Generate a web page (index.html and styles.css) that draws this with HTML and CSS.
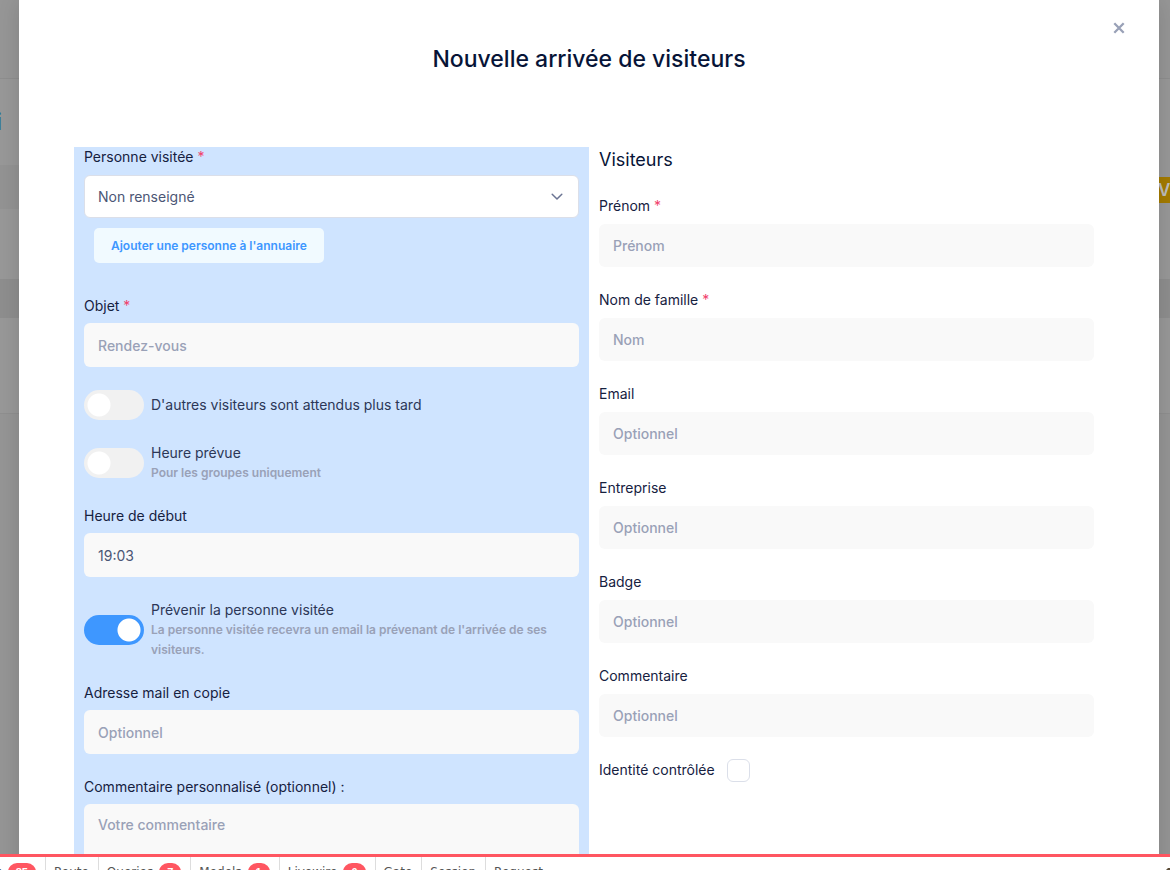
FILE: index.html
```html
<!DOCTYPE html>
<html lang="fr">
<head>
<meta charset="utf-8">
<meta name="viewport" content="width=device-width, initial-scale=1">
<title>Nouvelle arrivée de visiteurs</title>
<link rel="stylesheet" href="styles.css">
</head>
<body>
<div class="backdrop" aria-hidden="true">
  <div class="band band-header"></div>
  <div class="band band-title"><span class="page-title">i</span></div>
  <div class="band band-filters"><span class="tag">V</span></div>
  <div class="band band-space"></div>
  <div class="band band-thead"></div>
  <div class="band band-rows"></div>
</div>

<div class="modal" role="dialog" aria-labelledby="modal-title">
  <div class="dialog">
    <button class="close" type="button" aria-label="Fermer">
      <svg width="12" height="12" viewBox="0 0 12 12"><path d="M1.3 1.3 L10.7 10.7 M10.7 1.3 L1.3 10.7" stroke="currentColor" stroke-width="2.3" fill="none"/></svg>
    </button>
    <h1 class="title" id="modal-title">Nouvelle arrivée de visiteurs</h1>
    <form class="columns">
      <div class="column column-visit">
        <div class="field field-host">
          <label for="host">Personne visitée <span class="required">*</span></label>
          <div class="select-wrap">
            <select class="control select" id="host"><option>Non renseigné</option></select>
            <svg class="chevron" width="12" height="8" viewBox="0 0 12 8"><path d="M1.2 1.2 L6 6 L10.8 1.2" stroke="currentColor" stroke-width="1.5" fill="none" stroke-linecap="round" stroke-linejoin="round"/></svg>
          </div>
          <button class="add-button" type="button">Ajouter une personne à l'annuaire</button>
        </div>
        <div class="field">
          <label for="subject">Objet <span class="required">*</span></label>
          <input class="control" id="subject" type="text" placeholder="Rendez-vous">
        </div>
        <label class="switch">
          <input class="toggle" type="checkbox">
          <span class="switch-text">D'autres visiteurs sont attendus plus tard</span>
        </label>
        <label class="switch">
          <input class="toggle" type="checkbox">
          <span class="switch-text">Heure prévue<small>Pour les groupes uniquement</small></span>
        </label>
        <div class="field">
          <label for="start">Heure de début</label>
          <input class="control" id="start" type="text" value="19:03">
        </div>
        <label class="switch">
          <input class="toggle" type="checkbox" checked>
          <span class="switch-text">Prévenir la personne visitée<small>La personne visitée recevra un email la prévenant de l'arrivée de ses visiteurs.</small></span>
        </label>
        <div class="field">
          <label for="copy">Adresse mail en copie</label>
          <input class="control" id="copy" type="text" placeholder="Optionnel">
        </div>
        <div class="field">
          <label for="message">Commentaire personnalisé (optionnel) :</label>
          <textarea class="control area" id="message" placeholder="Votre commentaire"></textarea>
        </div>
      </div>
      <div class="column column-visitors">
        <h2 class="subtitle">Visiteurs</h2>
        <div class="field">
          <label for="first-name">Prénom <span class="required">*</span></label>
          <input class="control" id="first-name" type="text" placeholder="Prénom">
        </div>
        <div class="field">
          <label for="last-name">Nom de famille <span class="required">*</span></label>
          <input class="control" id="last-name" type="text" placeholder="Nom">
        </div>
        <div class="field">
          <label for="email">Email</label>
          <input class="control" id="email" type="text" placeholder="Optionnel">
        </div>
        <div class="field">
          <label for="company">Entreprise</label>
          <input class="control" id="company" type="text" placeholder="Optionnel">
        </div>
        <div class="field">
          <label for="badge">Badge</label>
          <input class="control" id="badge" type="text" placeholder="Optionnel">
        </div>
        <div class="field">
          <label for="comment">Commentaire</label>
          <input class="control" id="comment" type="text" placeholder="Optionnel">
        </div>
        <div class="identity">
          <label for="identity">Identité contrôlée</label>
          <input class="checkbox" id="identity" type="checkbox">
        </div>
      </div>
    </form>
  </div>
</div>

<nav class="debugbar">
  <a class="tab tab-first" href="#">s<span class="count">85</span></a>
  <a class="tab" href="#">Route</a>
  <a class="tab" href="#">Queries<span class="count">7</span></a>
  <a class="tab" href="#">Models<span class="count">1</span></a>
  <a class="tab" href="#">Livewire<span class="count">0</span></a>
  <a class="tab" href="#">Gate</a>
  <a class="tab" href="#">Session</a>
  <a class="tab" href="#">Request</a>
  <svg class="opener" width="4" height="3" viewBox="0 0 4 3"><path d="M0 3 L2 1 H4 V3 Z" fill="#5a4a35"/></svg>
</nav>
</body>
</html>
```
FILE: styles.css
```css
* { box-sizing: border-box; }

body {
  margin: 0;
  height: 100vh;
  overflow: hidden;
  font-family: Inter, sans-serif;
  font-size: 14px;
  line-height: 20px;
  color: #071437;
}

/* Dimmed page behind the dialog */
.backdrop {
  position: fixed;
  inset: 0;
  background: #969696;
}
.band { background: #999999; }
.band-header { height: 79px; background: #979797; border-bottom: 1px solid #8f8f8f; }
.band-title { height: 86px; padding-top: 33px; }
.page-title {
  display: flex;
  justify-content: flex-end;
  width: 2px;
  font-size: 23px;
  font-weight: 600;
  color: #2b6ca3;
}
.band-filters {
  display: flex;
  align-items: center;
  justify-content: flex-end;
  height: 44px;
  padding-top: 6px;
  background: linear-gradient(90deg, #949494 50%, #999999 50%);
}
.tag {
  width: 12px;
  height: 26px;
  overflow: hidden;
  background: #a57c00;
  color: #bfbfbf;
  font-size: 17px;
  font-weight: 600;
  line-height: 26px;
}
.band-space { height: 70px; }
.band-thead { height: 39px; background: #8f8f8f; }
.band-rows { height: 96px; border-bottom: 1px solid #909090; }

/* Dialog */
.modal {
  position: fixed;
  inset: 0;
  padding: 0 11px 0 19px;
  overflow: hidden;
}
.dialog {
  position: relative;
  min-height: 100%;
  padding: 44px 55px 40px;
  background: #ffffff;
  box-shadow: 0 0 24px rgba(0, 0, 0, 0.15);
}
.close {
  position: absolute;
  top: 16px;
  right: 28px;
  display: grid;
  place-items: center;
  width: 24px;
  height: 24px;
  padding: 0;
  border: 0;
  background: none;
  color: #99a1b7;
}
.title {
  margin: 0 0 73px;
  font-size: 23px;
  font-weight: 500;
  line-height: 30px;
  text-align: center;
}
.columns {
  display: grid;
  grid-template-columns: 1fr 1fr;
}
.column {
  display: flex;
  flex-direction: column;
  gap: 23px;
  padding: 0 10px 30px;
}
.column-visit { background: #cfe4ff; }

.field {
  display: flex;
  flex-direction: column;
  gap: 8px;
  color: #16213f;
}
.column-visit .field { gap: 7px; }
.column-visit .field-host {
  gap: 8px;
  padding-bottom: 10px;
}
.required { color: #f1416c; }
.control {
  width: 100%;
  height: 43px;
  padding: 0 14px;
  border: 0;
  border-radius: 6px;
  background: #f9f9f9;
  color: #4b5675;
  font: inherit;
}
.column-visit .control { height: 44px; }
.control::placeholder {
  color: #99a1b7;
  font-weight: 500;
  opacity: 1;
}
.column-visit .area {
  height: 110px;
  padding-top: 11px;
  resize: none;
}
.select-wrap { position: relative; }
.column-visit .select {
  display: block;
  height: 43px;
  padding: 0 13px;
  border: 1px solid #dbdfe9;
  background: #ffffff;
  appearance: none;
}
.chevron {
  position: absolute;
  top: 18px;
  right: 16px;
  color: #6b7493;
  pointer-events: none;
}
.add-button {
  align-self: flex-start;
  height: 35px;
  margin: 2px 10px 0;
  padding: 0 17px;
  border: 0;
  border-radius: 5px;
  background: #f1faff;
  color: #3e97ff;
  font: inherit;
  font-size: 12px;
  font-weight: 600;
}

.switch {
  display: flex;
  align-items: center;
  gap: 7px;
  color: #2c3757;
}
.toggle {
  flex: none;
  width: 60px;
  height: 30px;
  margin: 0;
  border-radius: 15px;
  background: radial-gradient(circle at 15px 15px, #ffffff 11px, #f1f1f1 12px);
  appearance: none;
}
.toggle:checked { background: radial-gradient(circle at 45px 15px, #ffffff 11px, #3e97ff 12px); }
.switch-text small {
  display: block;
  color: #99a1b7;
  font-size: 12px;
  font-weight: 600;
}

.subtitle {
  margin: 0;
  font-size: 18px;
  font-weight: 400;
  line-height: 26px;
}
.identity {
  display: flex;
  align-items: center;
  gap: 12px;
  height: 20px;
  color: #16213f;
}
.checkbox {
  width: 23px;
  height: 23px;
  margin: 0;
  border: 1px solid #dbdfe9;
  border-radius: 6px;
  background: #ffffff;
  appearance: none;
}

/* Developer toolbar */
.debugbar {
  position: fixed;
  inset: auto 0 0;
  display: flex;
  height: 16px;
  overflow: hidden;
  border-top: 3px solid #ff5661;
  background: #ffffff;
  font-family: "DejaVu Sans", sans-serif;
  font-size: 12px;
}
.tab {
  display: flex;
  align-items: center;
  gap: 6px;
  height: 30px;
  padding: 0 9px 0 8px;
  border-right: 1px solid #dddddd;
  color: #555555;
  text-decoration: none;
}
.tab-first {
  justify-content: flex-end;
  width: 46px;
  padding-left: 0;
}
.tab:last-of-type { border-right: 0; }
.count {
  padding: 0 8px;
  border-radius: 9px;
  background: #ff5661;
  color: #ffffff;
  font-family: "Liberation Sans", sans-serif;
  font-size: 11px;
  font-weight: 700;
  line-height: 18px;
}
.opener {
  align-self: flex-end;
  margin-left: auto;
}
```
